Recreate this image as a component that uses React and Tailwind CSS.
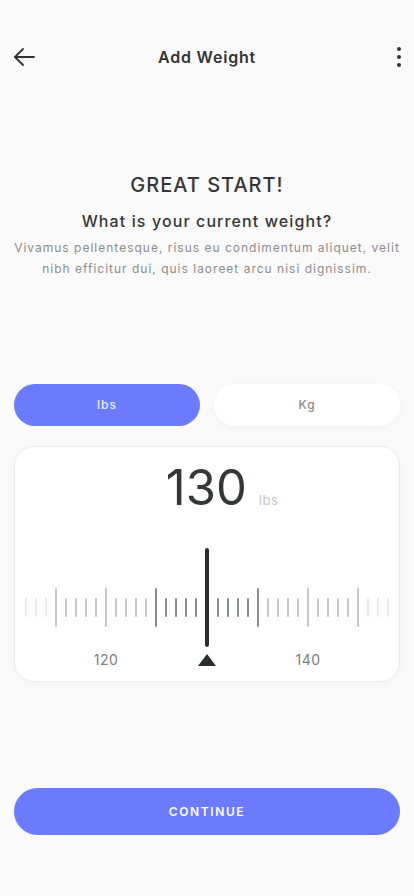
import React, { useState } from 'react'

const font = { fontFamily: 'Inter, "Noto Sans", sans-serif' }

const tickColor = (i) => {
  // i: distance from centre, 1..18
  if (i <= 5) return 'bg-[#8b8d94]'
  if (i <= 15) return 'bg-[#c6c6cb]'
  return 'bg-[#e9e9ea]'
}

const Tick = ({ dist, major }) => (
  <div
    className={`w-[2px] shrink-0 rounded-full ${tickColor(dist)} ${major ? 'h-[39px] mt-[40px]' : 'h-[19px] mt-[50px]'}`}
  />
)

const Ruler = () => {
  const left = Array.from({ length: 18 }, (_, k) => 18 - k)
  const right = Array.from({ length: 18 }, (_, k) => k + 1)
  return (
    <div className="flex flex-col items-center">
      <div className="flex items-start justify-center gap-[8px] h-[99px]">
        {left.map((d) => (
          <Tick key={'l' + d} dist={d} major={d % 5 === 0} />
        ))}
        <div className="w-[4px] h-[99px] shrink-0 rounded-full bg-[#2b2d33]" />
        {right.map((d) => (
          <Tick key={'r' + d} dist={d} major={d % 5 === 0} />
        ))}
      </div>
      <div className="flex items-center justify-center gap-[62px] mt-[7px] h-[12px]">
        <span className="w-[60px] text-center text-[14px] tracking-[0.5px] text-[#7d7d7d] leading-none">120</span>
        <svg width="18" height="12" viewBox="0 0 18 12" className="shrink-0">
          <path d="M9 0 L18 12 L0 12 Z" fill="#2b2d33" />
        </svg>
        <span className="w-[60px] text-center text-[14px] tracking-[0.5px] text-[#7d7d7d] leading-none">140</span>
      </div>
    </div>
  )
}

const App = () => {
  const [unit, setUnit] = useState('lbs')

  return (
    <div className="min-h-[896px] w-full bg-[#fafafa] flex flex-col" style={font}>
      {/* Header */}
      <div className="flex items-center justify-between h-[42px] mt-[36px] px-[12px]">
        <button className="w-[24px] h-[24px] flex items-center justify-center">
          <svg width="22" height="20" viewBox="0 0 22 20" fill="none" stroke="#333" strokeWidth="1.8" strokeLinecap="round" strokeLinejoin="round">
            <path d="M21 10 H2" />
            <path d="M10 2 L2 10 L10 18" />
          </svg>
        </button>
        <h1 className="text-[16px] font-semibold tracking-[0.8px] text-[#333]">Add Weight</h1>
        <button className="w-[24px] h-[24px] flex items-center justify-end">
          <svg width="6" height="22" viewBox="0 0 6 22" fill="#333">
            <circle cx="3" cy="3" r="2" />
            <circle cx="3" cy="11" r="2" />
            <circle cx="3" cy="19" r="2" />
          </svg>
        </button>
      </div>

      {/* Intro */}
      <div className="flex flex-col items-center text-center mt-[93px] px-[12px]">
        <h2 className="text-[20px] font-medium tracking-[1px] text-[#363636] leading-[28px]">GREAT START!</h2>
        <p className="mt-[10px] text-[16px] font-medium tracking-[1.1px] text-[#363636] leading-[24px]">What is your current weight?</p>
        <p className="mt-[4px] text-[12px] tracking-[1px] text-[#8c8c8c] leading-[21px]">
          Vivamus pellentesque, risus eu condimentum aliquet, velit nibh efficitur dui, quis laoreet arcu nisi dignissim.
        </p>
      </div>

      {/* Unit toggle */}
      <div className="flex gap-[14px] px-[14px] mt-[105px]">
        <button
          onClick={() => setUnit('lbs')}
          className={`flex-1 h-[42px] rounded-full text-[12px] font-medium tracking-[1px] ${unit === 'lbs' ? 'bg-[#6b7bff] text-[#e8ebff]' : 'bg-white text-[#8a8a8a] shadow-[0_2px_10px_rgba(0,0,0,0.04)]'}`}
        >
          lbs
        </button>
        <button
          onClick={() => setUnit('kg')}
          className={`flex-1 h-[42px] rounded-full text-[12px] font-medium tracking-[1px] ${unit === 'kg' ? 'bg-[#6b7bff] text-[#e8ebff]' : 'bg-white text-[#8a8a8a] shadow-[0_2px_10px_rgba(0,0,0,0.04)]'}`}
        >
          Kg
        </button>
      </div>

      {/* Weight card */}
      <div className="mx-[14px] mt-[20px] bg-white rounded-[20px] border border-[#ececec] shadow-[0_2px_12px_rgba(0,0,0,0.03)] pt-[17px] pb-[15px]">
        <div className="flex items-baseline justify-center">
          <span className="text-[49px] leading-[48px] font-normal text-[#333836] ml-[30px]">130</span>
          <span className="ml-[12px] text-[13px] text-[#c4c4c4] tracking-[0.5px]">lbs</span>
        </div>
        <div className="mt-[36px]">
          <Ruler />
        </div>
      </div>

      {/* Continue */}
      <div className="px-[14px] mt-[106px]">
        <button className="w-full h-[47px] rounded-full bg-[#6b7bff] text-white text-[12px] font-semibold tracking-[1.6px]">
          CONTINUE
        </button>
      </div>
    </div>
  )
}

export default App
